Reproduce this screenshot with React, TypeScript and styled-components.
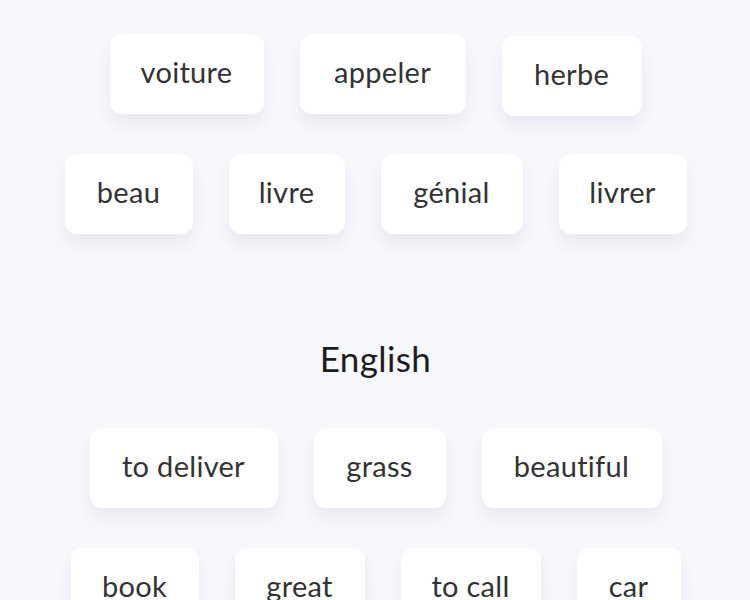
import styled, { createGlobalStyle } from 'styled-components';

const GlobalStyle = createGlobalStyle`
  html, body {
    margin: 0;
    padding: 0;
    background: #f7f8fc;
  }
  body {
    font-family: Lato, "Noto Sans", sans-serif;
    color: #333;
  }
`;

const Page = styled.div`
  width: 750px;
  height: 600px;
  overflow: hidden;
  padding-top: 34px;
  padding-left: 1px;
  box-sizing: border-box;
  display: flex;
  flex-direction: column;
  align-items: center;
`;

const Group = styled.div`
  display: flex;
  flex-direction: column;
  align-items: center;
  gap: 40px;
`;

const Row = styled.div`
  display: flex;
  justify-content: center;
  gap: 36px;
`;

const Card = styled(({ w, offset, ...otherProps }) => <div {...otherProps} />)`
  width: ${(p) => p.w}px;
  height: 80px;
  transform: translateY(${(p) => p.offset || 0}px);
  display: flex;
  align-items: center;
  justify-content: center;
  padding-bottom: 5px;
  box-sizing: border-box;
  background-color: #fff;
  border-radius: 12px;
  box-shadow: 0 10px 16px rgba(40, 45, 80, 0.07);
  font-size: 29px;
  color: #333;
  letter-spacing: 0.3px;
`;

const Title = styled.h2`
  margin: 100px 0 46px;
  height: 48px;
  line-height: 48px;
  font-size: 35px;
  font-weight: 400;
  color: #1c1c1c;
  letter-spacing: 0.4px;
`;

const french = [
  [
    { t: 'voiture', w: 154 },
    { t: 'appeler', w: 166 },
    { t: 'herbe', w: 140, o: 2 },
  ],
  [
    { t: 'beau', w: 128 },
    { t: 'livre', w: 116 },
    { t: 'génial', w: 142 },
    { t: 'livrer', w: 128 },
  ],
];

const english = [
  [
    { t: 'to deliver', w: 188 },
    { t: 'grass', w: 132 },
    { t: 'beautiful', w: 180 },
  ],
  [
    { t: 'book', w: 128 },
    { t: 'great', w: 130 },
    { t: 'to call', w: 140 },
    { t: 'car', w: 104 },
  ],
];

type Word = { t: string; w: number; o?: number };

const WordRows = ({ rows }: { rows: Word[][] }) => (
  <Group>
    {rows.map((row, i) => (
      <Row key={i}>
        {row.map((word) => (
          <Card key={word.t} w={word.w} offset={word.o}>
            {word.t}
          </Card>
        ))}
      </Row>
    ))}
  </Group>
);

export default function App() {
  return (
    <>
      <GlobalStyle />
      <Page>
        <WordRows rows={french} />
        <Title>English</Title>
        <WordRows rows={english} />
      </Page>
    </>
  );
}
